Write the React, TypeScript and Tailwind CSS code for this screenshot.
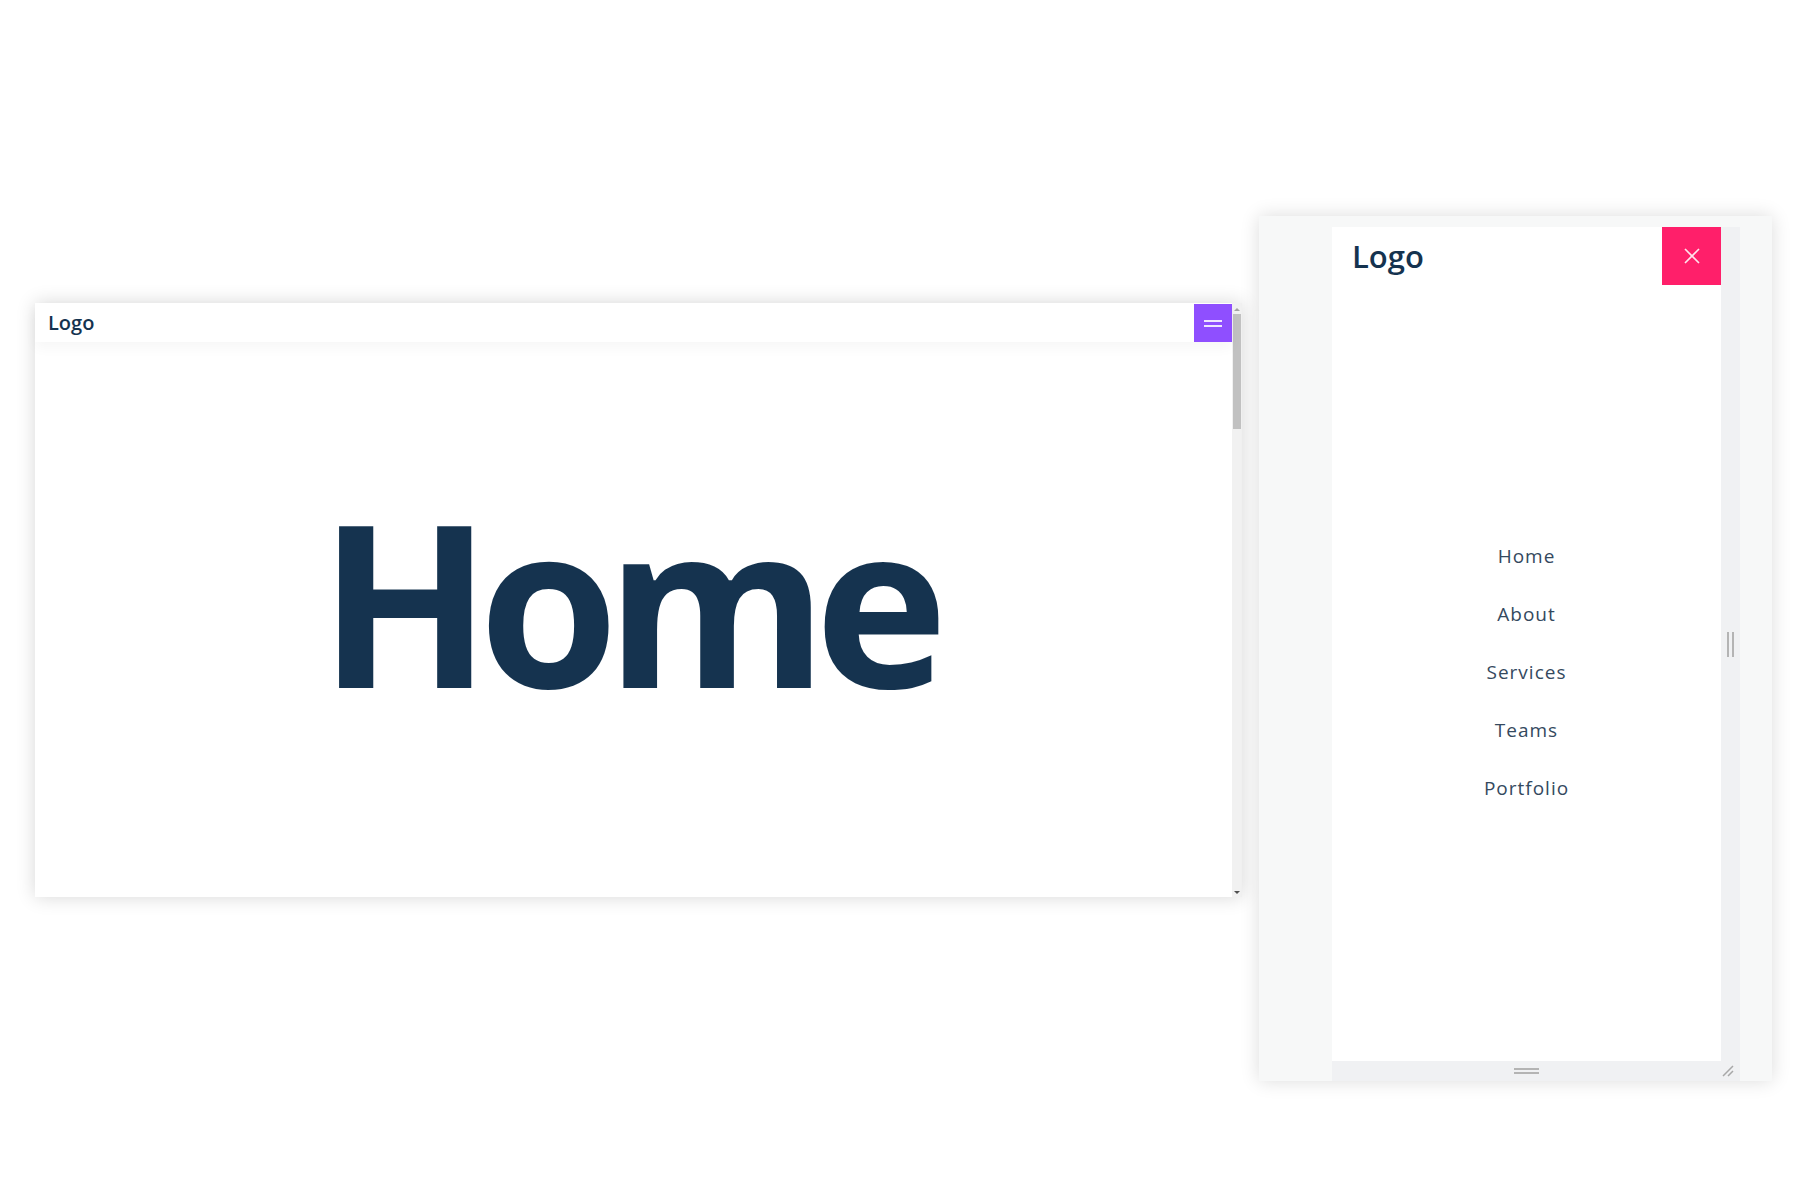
import { X } from "lucide-react";

const navItems = ["Home", "About", "Services", "Teams", "Portfolio"];

function DesktopPreview() {
  return (
    <div className="mt-[303px] flex h-[594px] w-[1207px] bg-white shadow-[0_0_18px_rgba(0,0,0,0.16)]">
      {/* page content, header sits over it */}
      <div className="relative flex flex-1 items-center justify-center">
        <div className="absolute inset-x-0 top-0 flex h-[39px] items-center justify-between bg-white shadow-[0_6px_12px_rgba(0,0,0,0.035)]">
          <span className="pl-[13px] text-[20px] font-semibold text-[#15334f]">Logo</span>
          <button className="mt-px flex h-[38px] w-[38px] flex-col items-center justify-center gap-[3px] bg-[#8f4fff]">
            <span className="h-[2px] w-[18px] bg-[#efe6ff]" />
            <span className="h-[2px] w-[18px] bg-[#efe6ff]" />
          </button>
        </div>
        <h1 className="pr-[13px] text-[226px] font-bold leading-none tracking-[-13px] text-[#15334f]">Home</h1>
      </div>

      {/* scrollbar */}
      <div className="flex w-[10px] flex-col items-center bg-[#f1f1f1]">
        <div className="mt-[5px] h-0 w-0 border-x-[3px] border-b-[3px] border-x-transparent border-b-[#a3a3a3]" />
        <div className="mt-[3px] h-[115px] w-[8px] bg-[#c1c1c1]" />
        <div className="flex-1" />
        <div className="mb-[3px] h-0 w-0 border-x-[3px] border-t-[3px] border-x-transparent border-t-[#505050]" />
      </div>
    </div>
  );
}

function MobilePreview() {
  return (
    <div className="mt-[216px] flex h-[865px] w-[513px] bg-[#f7f8f8] pl-[73px] pt-[11px] shadow-[0_0_18px_rgba(0,0,0,0.14)]">
      <div className="flex w-[408px] flex-col">
        <div className="flex flex-1">
          {/* phone screen */}
          <div className="flex w-[389px] flex-col bg-white">
            <div className="flex h-[58px] items-center justify-between">
              <span className="pl-[20px] text-[31px] font-semibold text-[#15334f]">Logo</span>
              <button className="flex h-[58px] w-[59px] items-center justify-center bg-[#ff1f6a]">
                <X size={26} strokeWidth={1.6} color="#ffe3ec" />
              </button>
            </div>
            <nav className="flex flex-1 flex-col items-center justify-center pb-[2px]">
              {navItems.map((item) => (
                <a
                  key={item}
                  className="text-[19px] leading-[58px] tracking-[1px] text-[#34495e]"
                >
                  {item}
                </a>
              ))}
            </nav>
          </div>
          {/* right resize strip */}
          <div className="flex w-[19px] items-center justify-center gap-[3px] bg-[#f0f1f3]">
            <span className="h-[25px] w-[2px] bg-[#b4b4b4]" />
            <span className="h-[25px] w-[2px] bg-[#b4b4b4]" />
          </div>
        </div>
        {/* bottom resize strip */}
        <div className="relative flex h-[20px] items-center justify-center bg-[#f0f1f3] pr-[19px]">
          <div className="flex flex-col gap-[2px]">
            <span className="h-[2px] w-[25px] bg-[#b4b4b4]" />
            <span className="h-[2px] w-[25px] bg-[#b4b4b4]" />
          </div>
          <svg className="absolute bottom-[4px] right-[6px]" width="12" height="12" viewBox="0 0 12 12">
            <path d="M1 11 L11 1 M6 11 L11 6" stroke="#a8a8a8" strokeWidth="1.5" />
          </svg>
        </div>
      </div>
    </div>
  );
}

export default function App() {
  return (
    <div
      className="flex min-h-[1200px] w-[1800px] items-start gap-[17px] bg-white pl-[35px]"
      style={{ fontFamily: '"Open Sans", sans-serif' }}
    >
      <DesktopPreview />
      <MobilePreview />
    </div>
  );
}
